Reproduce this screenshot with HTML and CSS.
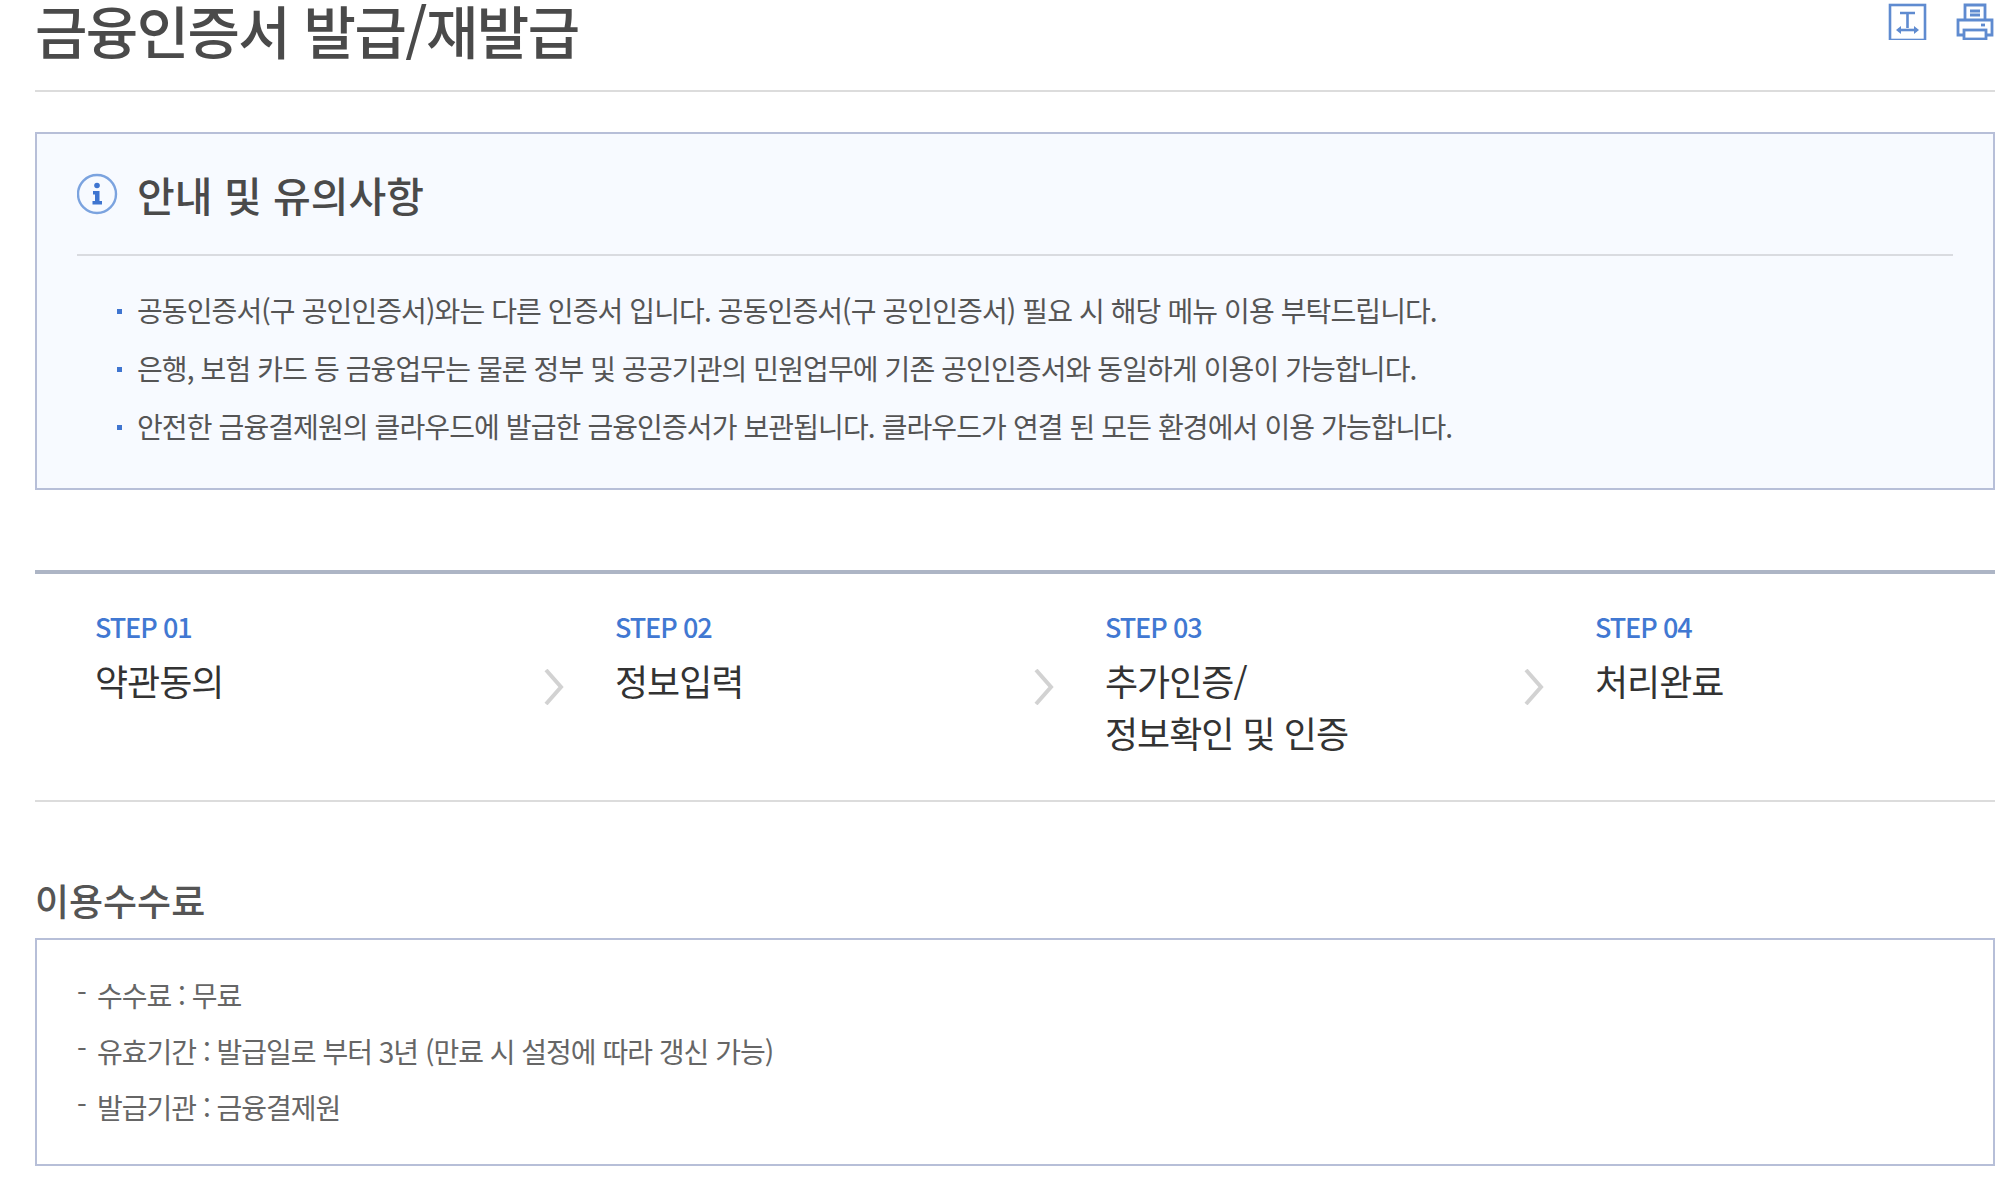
FILE: index.html
```html
<!DOCTYPE html>
<html lang="ko">
<head>
<meta charset="utf-8">
<title>금융인증서 발급/재발급</title>
<link rel="stylesheet" href="styles.css">
</head>
<body>
<main class="page">
  <header class="page-head">
    <h1 class="page-title">금융인증서 발급/재발급</h1>
    <div class="tools">
      <svg class="tool" width="40" height="40" viewBox="0 0 40 40" fill="none" stroke="#5f8bd0" stroke-width="2.6">
        <rect x="2" y="5" width="35" height="35"/>
        <path d="M12 13h15M19.500 13v15" />
        <path d="M10 30h19" />
        <path d="M8 30l5-4v8zM31 30l-5-4v8z" fill="#5f8bd0" stroke="none"/>
      </svg>
      <svg class="tool" width="38" height="40" viewBox="0 0 38 40" fill="none" stroke="#5f8bd0" stroke-width="2.8">
        <path d="M9 20V5h20v15"/>
        <path d="M14 11h10M14 15h10"/>
        <path d="M8 35H2V20h34v15h-6"/>
        <rect x="8" y="30" width="22" height="9"/>
        <path d="M25 25h4" />
      </svg>
    </div>
  </header>

  <section class="notice">
    <div class="notice-head">
      <svg class="notice-icon" width="41" height="42" viewBox="0 0 41 42">
        <circle cx="20" cy="21" r="19" fill="none" stroke="#7ba3df" stroke-width="2.400"/>
        <circle cx="20" cy="12.500" r="2.800" fill="#3f75d0"/>
        <path d="M16 18h6.500v10h2.500v3.500h-9.500V28h2.500v-6.500H16z" fill="#3f75d0"/>
      </svg>
      <h2 class="notice-title">안내 및 유의사항</h2>
    </div>
    <ul class="notice-list">
      <li>공동인증서(구 공인인증서)와는 다른 인증서 입니다. 공동인증서(구 공인인증서) 필요 시 해당 메뉴 이용 부탁드립니다.</li>
      <li>은행, 보험 카드 등 금융업무는 물론 정부 및 공공기관의 민원업무에 기존 공인인증서와 동일하게 이용이 가능합니다.</li>
      <li>안전한 금융결제원의 클라우드에 발급한 금융인증서가 보관됩니다. 클라우드가 연결 된 모든 환경에서 이용 가능합니다.</li>
    </ul>
  </section>

  <ol class="steps">
    <li class="step">
      <span class="step-no">STEP 01</span>
      <strong class="step-name">약관동의</strong>
    </li>
    <li class="step">
      <svg class="step-arrow" width="20" height="36" viewBox="0 0 20 36" fill="none" stroke="#d2d2d2" stroke-width="4"><path d="M2 1l15 17L2 35"/></svg>
      <span class="step-no">STEP 02</span>
      <strong class="step-name">정보입력</strong>
    </li>
    <li class="step">
      <svg class="step-arrow" width="20" height="36" viewBox="0 0 20 36" fill="none" stroke="#d2d2d2" stroke-width="4"><path d="M2 1l15 17L2 35"/></svg>
      <span class="step-no">STEP 03</span>
      <strong class="step-name">추가인증/<br>정보확인 및 인증</strong>
    </li>
    <li class="step">
      <svg class="step-arrow" width="20" height="36" viewBox="0 0 20 36" fill="none" stroke="#d2d2d2" stroke-width="4"><path d="M2 1l15 17L2 35"/></svg>
      <span class="step-no">STEP 04</span>
      <strong class="step-name">처리완료</strong>
    </li>
  </ol>

  <section class="fee">
    <h3 class="fee-title">이용수수료</h3>
    <ul class="fee-list">
      <li>수수료 : 무료</li>
      <li>유효기간 : 발급일로 부터 3년 (만료 시 설정에 따라 갱신 가능)</li>
      <li>발급기관 : 금융결제원</li>
    </ul>
  </section>
</main>
</body>
</html>
```
FILE: styles.css
```css
* { box-sizing: border-box; }
html, body { margin: 0; padding: 0; background: #fff; }
body {
  font-family: "Noto Sans CJK KR", "Noto Sans", sans-serif;
  color: #555;
  overflow: hidden;
}
h1, h2, h3, ul, ol { margin: 0; padding: 0; font-weight: 400; list-style: none; }
.page { padding: 0 19px 0 35px; }

.page-head {
  display: flex;
  justify-content: space-between;
  height: 92px;
  border-bottom: 2px solid #dcdcdc;
}
.page-title {
  font-size: 57px;
  font-weight: 500;
  line-height: 58px;
  letter-spacing: -1.6px;
  color: #4a4a4a;
}
.tools { display: flex; gap: 28px; align-items: flex-start; padding-right: 1px; }
.tool { display: block; }

.notice {
  margin-top: 40px;
  height: 358px;
  border: 2px solid #b7bfd8;
  background: #f7faff;
  padding: 0 40px;
}
.notice-head {
  display: flex;
  align-items: center;
  gap: 19px;
  height: 122px;
  border-bottom: 2px solid #d9dbe0;
}
.notice-icon { flex: none; }
.notice-title {
  font-size: 41px;
  font-weight: 500;
  color: #4a4a4a;
}
.notice-list { padding: 25px 0 0 40px; }
.notice-list li {
  position: relative;
  padding-left: 20px;
  height: 58px;
  line-height: 58px;
  font-size: 28px;
  letter-spacing: -0.9px;
  color: #555;
}
.notice-list li::before {
  content: "";
  position: absolute;
  left: 0;
  top: 28px;
  width: 5px;
  height: 5px;
  background: #3f75d0;
}

.steps {
  display: grid;
  grid-template-columns: 520px 490px 490px 1fr;
  margin-top: 80px;
  height: 232px;
  border-top: 4px solid #adb5c5;
  border-bottom: 2px solid #dcdcdc;
  padding: 35px 0 0 60px;
}
.step { position: relative; }
.step-arrow { position: absolute; left: -71px; top: 60px; }
.step-no {
  display: block;
  font-size: 27px;
  font-weight: 500;
  line-height: 36px;
  letter-spacing: -1.100px;
  color: #4178d2;
}
.step-name {
  display: block;
  margin-top: 9px;
  font-size: 36px;
  line-height: 52px;
  font-weight: 400;
  letter-spacing: -1px;
  color: #333;
}

.fee { padding-top: 74px; }
.fee-title {
  font-size: 37px;
  line-height: 48px;
  font-weight: 500;
  color: #555;
}
.fee-list {
  margin-top: 14px;
  height: 228px;
  border: 2px solid #b7bfd8;
  padding: 27px 40px 0;
}
.fee-list li {
  position: relative;
  padding-left: 20px;
  height: 56px;
  line-height: 56px;
  font-size: 28px;
  letter-spacing: -1px;
  color: #666;
}
.fee-list li::before {
  content: "-";
  position: absolute;
  left: 0;
  top: -3px;
}
```
